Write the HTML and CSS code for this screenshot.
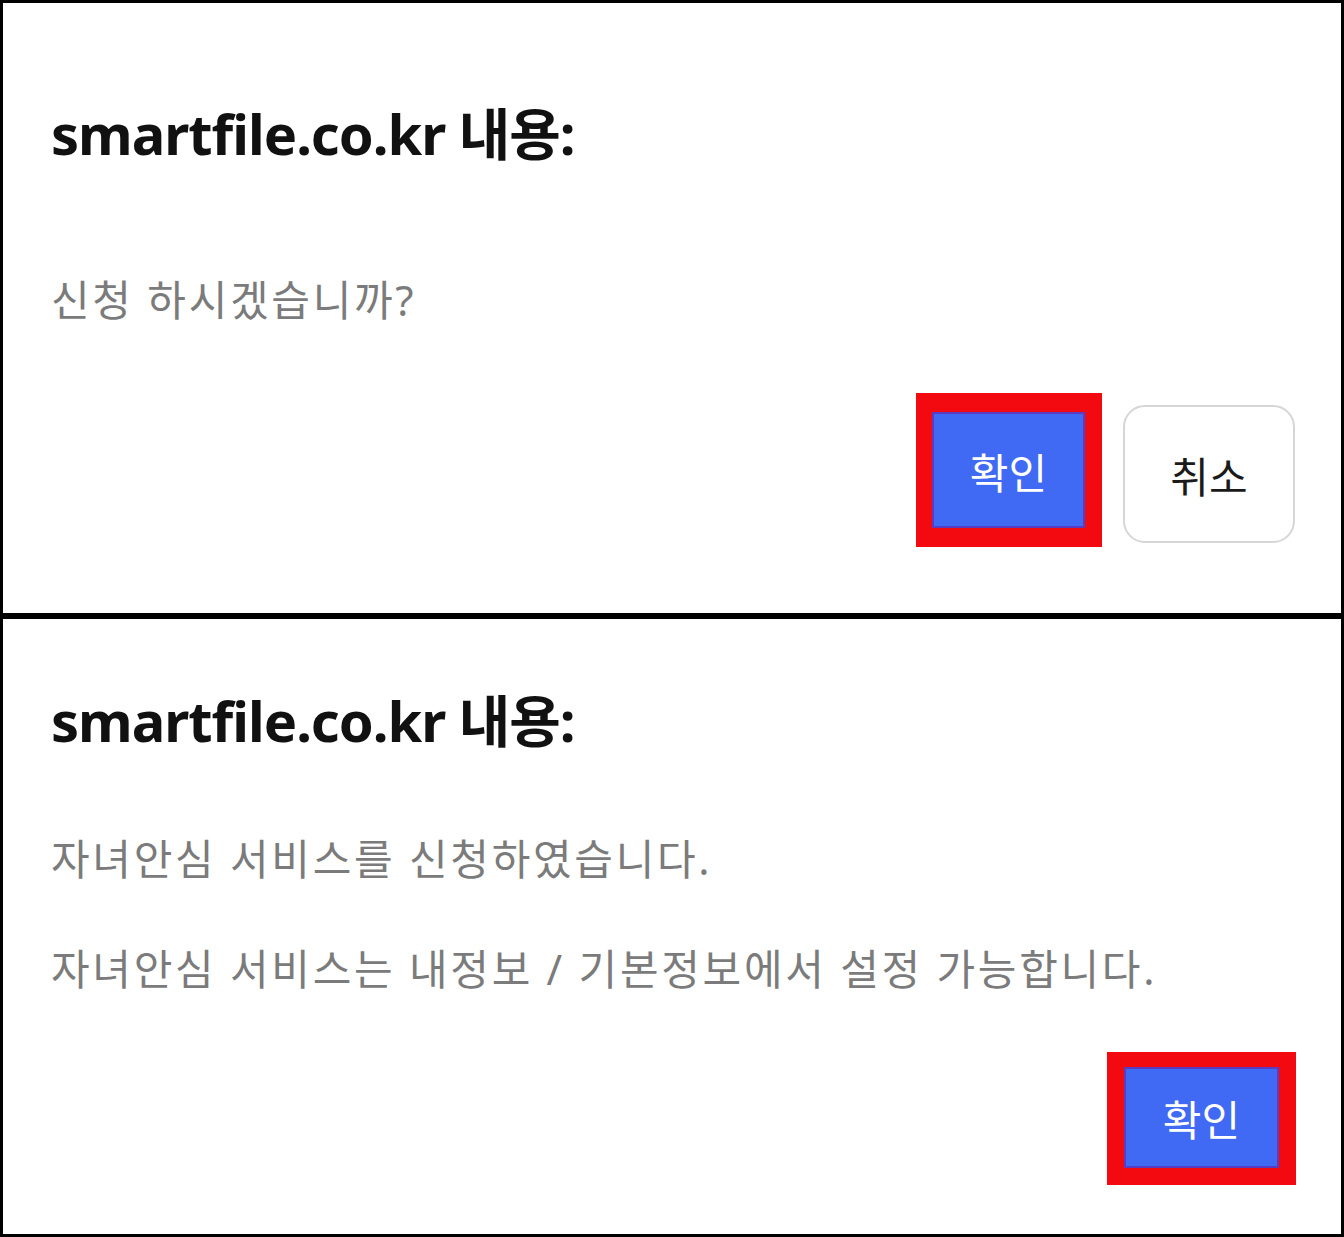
FILE: index.html
```html
<!DOCTYPE html>
<html lang="ko">
<head>
    <meta charset="UTF-8">
    <meta name="viewport" content="width=device-width, initial-scale=1.0">
    <title>smartfile.co.kr 내용</title>
    <link rel="stylesheet" href="styles.css">
</head>
<body>
    <div class="dialog dialog-ask">
        <h2 class="dialog-title">smartfile.co.kr 내용:</h2>
        <p class="dialog-message">신청 하시겠습니까?</p>
        <div class="dialog-actions">
            <span class="highlight"><button class="btn btn-primary">확인</button></span>
            <button class="btn btn-secondary">취소</button>
        </div>
    </div>

    <div class="dialog dialog-done">
        <h2 class="dialog-title">smartfile.co.kr 내용:</h2>
        <p class="dialog-message">자녀안심 서비스를 신청하였습니다.</p>
        <p class="dialog-message second">자녀안심 서비스는 내정보 / 기본정보에서 설정 가능합니다.</p>
        <div class="dialog-actions">
            <span class="highlight"><button class="btn btn-primary">확인</button></span>
        </div>
    </div>
</body>
</html>
```

FILE: styles.css
```css
body {
    margin: 0;
    font-family: "Noto Sans", "Noto Sans CJK KR", sans-serif;
    background: #fff;
}
.dialog {
    width: 1344px;
    box-sizing: border-box;
    border: 3px solid #000;
    padding: 0 46px 0 48px;
    background: #fff;
}
.dialog-title {
    margin: 0;
    font-size: 56px;
    line-height: 64px;
    font-weight: bold;
    letter-spacing: -1px;
    color: #111;
}
.dialog-message {
    margin: 0;
    font-size: 42px;
    line-height: 55px;
    letter-spacing: 2.7px;
    color: #7b7b7b;
}
.dialog-actions {
    display: flex;
    justify-content: flex-end;
    align-items: flex-start;
    gap: 21px;
}
.highlight {
    display: flex;
    background: #f20a10;
}
.btn {
    font-family: "Noto Sans", "Noto Sans CJK KR", sans-serif;
    font-size: 42px;
    cursor: pointer;
    padding: 0;
}
.btn-primary {
    background-color: #4069f4;
    color: #fff;
    border: 2px solid #5a3cc0;
}
.btn-secondary {
    width: 172px;
    height: 138px;
    margin-top: 12px;
    background: #fff;
    color: #1a1a1a;
    border: 2px solid #d6d6d6;
    border-radius: 22px;
}

/* first dialog: confirm question */
.dialog-ask {
    height: 616px;
}
.dialog-ask .dialog-title {
    margin-top: 98px;
}
.dialog-ask .dialog-message {
    margin-top: 107px;
}
.dialog-ask .dialog-actions {
    margin-top: 66px;
}
.dialog-ask .highlight {
    padding: 19px 17px 19px 16px;
}
.dialog-ask .btn-primary {
    width: 153px;
    height: 116px;
}

/* second dialog: result */
.dialog-done {
    height: 621px;
    padding-right: 45px;
}
.dialog-done .dialog-title {
    margin-top: 69px;
}
.dialog-done .dialog-message {
    margin-top: 79px;
}
.dialog-done .dialog-message.second {
    margin-top: 55px;
}
.dialog-done .dialog-actions {
    margin-top: 56px;
}
.dialog-done .highlight {
    padding: 15px 17px 17px 17px;
}
.dialog-done .btn-primary {
    width: 155px;
    height: 101px;
}
```
